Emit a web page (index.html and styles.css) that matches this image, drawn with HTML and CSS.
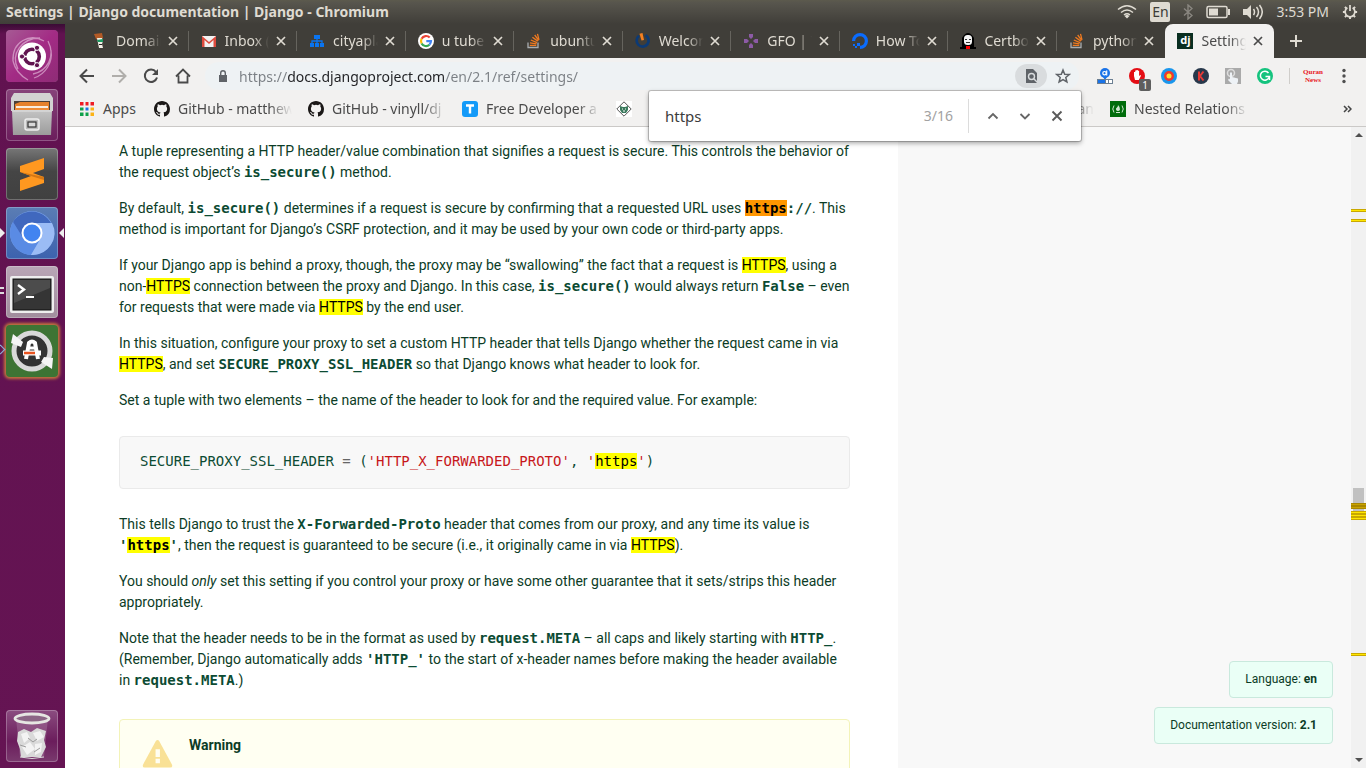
FILE: index.html
```html
<!DOCTYPE html>
<html lang="en">
<head>
<meta charset="utf-8">
<title>Settings | Django documentation | Django</title>
<link rel="stylesheet" href="styles.css">
</head>
<body>
<svg class="defs" aria-hidden="true">
  <defs>
    <linearGradient id="steel" x1="0" y1="0" x2="0" y2="1"><stop offset="0" stop-color="#c4c4c4"/><stop offset="1" stop-color="#9c9c9c"/></linearGradient>
    <linearGradient id="dash" x1="0" y1="0" x2="1" y2="1"><stop offset="0" stop-color="#a65a94"/><stop offset=".5" stop-color="#a32b85"/><stop offset="1" stop-color="#8e2c76"/></linearGradient>
    <symbol id="x" viewBox="0 0 10 10"><path d="M1 1l8 8M9 1L1 9" stroke="currentColor" stroke-width="1.7" fill="none"/></symbol>
    <symbol id="so" viewBox="0 0 16 16"><path d="M2 9.500v5h10v-5" fill="none" stroke="#a9adb0" stroke-width="1.300"/><path d="M3.800 12.300h6.500M4 9.800l6.500 1.100M4.800 7l6.200 2.600M6.400 4.200l5.400 3.900M8.700 2l4 5.300M11.500.8l1.500 6" stroke="#ef7a20" stroke-width="1.300" fill="none"/></symbol>
    <symbol id="gh" viewBox="0 0 16 16"><path fill="#1b1817" d="M8 0C3.580 0 0 3.580 0 8c0 3.540 2.290 6.530 5.470 7.590.4.070.55-.17.55-.38 0-.19-.01-.82-.01-1.490-2.010.37-2.530-.49-2.690-.94-.09-.23-.48-.94-.82-1.130-.28-.15-.68-.52-.01-.53.63-.01 1.080.58 1.230.82.72 1.210 1.870.87 2.330.66.070-.52.28-.87.51-1.070-1.780-.2-3.640-.89-3.640-3.950 0-.87.31-1.590.82-2.150-.08-.2-.36-1.020.08-2.120 0 0 .67-.21 2.200.82a7.600 7.600 0 0 1 4 0c1.530-1.040 2.200-.82 2.200-.82.44 1.100.16 1.920.08 2.120.51.56.82 1.270.82 2.150 0 3.070-1.870 3.750-3.650 3.950.29.25.54.73.54 1.480 0 1.070-.01 1.930-.01 2.200 0 .21.15.46.55.38A8 8 0 0 0 16 8c0-4.420-3.580-8-8-8z"/></symbol>
  </defs>
</svg>

<header class="menubar">
  <h1 class="window-title">Settings | Django documentation | Django - Chromium</h1>
  <div class="indicators">
    <svg class="ind-wifi" viewBox="0 0 20 16"><path d="M1 5.500Q10-2 19 5.500M4 8.500q6-5 12 0M7 11q3-2.500 6 0" fill="none" stroke="#dfdbd2" stroke-width="1.500"/><path d="M7.500 12L10 10.500 12.500 12 10 14.500z" fill="#dfdbd2"/></svg>
    <span class="keyboard">En</span>
    <svg class="ind-bt" viewBox="0 0 10 16"><path d="M1 4.500l8 7-4 3.500V1l4 3.500-8 7" fill="none" stroke="#8a8780" stroke-width="1.400"/></svg>
    <svg class="ind-battery" viewBox="0 0 24 14"><rect x="1" y="1.500" width="20" height="11" rx="1.500" fill="none" stroke="#dfdbd2" stroke-width="1.500"/><path d="M3 3.500h9v7H3z" fill="#dfdbd2"/><path d="M22 4h2v6h-2z" fill="#dfdbd2"/></svg>
    <svg class="ind-sound" viewBox="0 0 20 16"><path d="M0 5h4l4-4v14l-4-4H0z" fill="#dfdbd2"/><path d="M10.500 5q2 3 0 6M13.500 3q4 5 0 10M16.500 1q5.500 7 0 14" fill="none" stroke="#dfdbd2" stroke-width="1.500"/></svg>
    <span class="clock">3:53 PM</span>
    <svg class="ind-gear" viewBox="0 0 18 18"><path d="M6 4.300a5.500 5.500 0 1 0 6 0M9 1v7" fill="none" stroke="#dfdbd2" stroke-width="2"/><path d="M1 9h3M14 9h3M9 14v3M3.300 3.300l2 2M14.700 3.300l-2 2M3.300 14.700l2-2M14.700 14.700l-2-2" stroke="#dfdbd2" stroke-width="2.200"/></svg>
  </div>
</header>

<div class="desktop">
  <nav class="launcher" aria-label="Launcher">
    <button class="app dash" aria-label="Dash">
      <svg viewBox="0 0 52 52"><rect width="52" height="52" rx="4" fill="url(#dash)"/><g fill="none" stroke="#e5bcdc" stroke-width="1.300" opacity=".65"><path d="M7 31C6 11 24 3 38 11M12 39C4 24 16 8 34 8M42 11c8 16-1 30-15 33M45 20c2 12-5 24-17 28M7 31c2 9 8 15 15 19"/></g><circle cx="26" cy="26.500" r="14" fill="#fff"/><circle cx="26" cy="26.500" r="7.300" fill="none" stroke="#611450" stroke-width="3.600"/><path d="M26 26.500H12M26 26.500l6-11M26 26.500l6 11" stroke="#fff" stroke-width="1.400"/><circle cx="26" cy="26.500" r="5" fill="#fff"/><g fill="#611450" stroke="#fff"><circle cx="16" cy="26.500" r="2.600"/><circle cx="31" cy="17.800" r="2.600"/><circle cx="31" cy="35.200" r="2.600"/></g></svg>
    </button>
    <button class="app files" aria-label="Files">
      <svg viewBox="0 0 52 52"><path d="M8 4h36l3 5v13H5V9z" fill="#d2d2d2"/><path d="M8 12h36v11H8z" fill="#4b4038"/><path d="M9 15l5-2h29v9H9z" fill="#e6812c"/><path d="M10 17h32v2H10z" fill="#f9ede0"/><path d="M9 19h34v3H9z" fill="#ee8b37"/><path d="M6 21h40l-1 25H7z" fill="url(#steel)"/><path d="M6 22h40" stroke="#e4e4e4"/><rect x="19" y="30" width="14" height="11" rx="2" fill="#bbb" stroke="#eee" stroke-width="1.500"/><rect x="22" y="33" width="8" height="5" fill="#d8d8d8" stroke="#333" stroke-width="1.200"/></svg>
    </button>
    <button class="app sublime" aria-label="Sublime Text">
      <svg viewBox="0 0 52 52"><path d="M14 18l24-8v11l-11 4 11 4v6l-24 8V32l11-4-11-4z" fill="#ff9820"/><path d="M14 24l24 5v3l-13-4z" fill="#d67713"/></svg>
    </button>
    <button class="app chromium" aria-label="Chromium">
      <svg viewBox="0 0 52 52"><circle cx="26" cy="26" r="22" fill="#7ba5ee"/><path d="M7 15a22 22 0 0 0 18 33l10-17-18 0z" fill="#5a8be4"/><path d="M7 15a22 22 0 0 1 38 1H26l-9 15z" fill="#4068be"/><path d="M26 16h20a22 22 0 0 1-21 32l10-17z" fill="#9bbcf5"/><circle cx="26" cy="26" r="10.500" fill="#fff"/><circle cx="26" cy="26" r="8.500" fill="#4284f0"/></svg>
      <i class="mark-left"></i><i class="mark-right"></i>
    </button>
    <button class="app terminal" aria-label="Terminal">
      <svg viewBox="0 0 52 52"><rect x="4" y="10" width="44" height="37" rx="2" fill="#eee"/><rect x="7" y="13" width="38" height="31" fill="#353535" stroke="#111"/><path d="M8 14h36v8L8 37z" fill="#5b5b5b" opacity=".6"/><path d="M12 19l6 4.500-6 4.500" fill="none" stroke="#fff" stroke-width="2.400"/><path d="M20 31h8" stroke="#fff" stroke-width="2"/></svg>
      <i class="mark-double"></i>
    </button>
    <button class="app updater" aria-label="Software Updater">
      <svg viewBox="0 0 52 52"><circle cx="26" cy="26" r="18" fill="#333" stroke="#d9d9d9" stroke-width="5"/><path d="M5 18L7 9l10 8-2 5z" fill="#f5f5f5"/><path d="M47 33l-1 11-11-7 3-5z" fill="#f5f5f5"/><path d="M20 34l3-16q3-3 6 0l3 16" fill="none" stroke="#fff" stroke-width="4"/><path d="M22 23h8" stroke="#fff" stroke-width="3"/><path d="M17 28h18" stroke="#fff" stroke-width="5"/><path d="M18 28h11" stroke="#e95420" stroke-width="2.500"/></svg>
      <i class="mark-open"></i>
    </button>
    <button class="app trash" aria-label="Trash">
      <svg viewBox="0 0 52 52"><path d="M10 8h32l-4 39H14z" fill="#a87aa0" opacity=".45"/><path d="M12 22l6-3 7 3 6-4 9 3-2 9 2 7-5 10H15l-1-8-3-8z" fill="#d9d9d9"/><path d="M15 24l6-2 3 6-6 5zM27 23l7-2 4 6-7 4zM16 37l8-5 5 7-8 6zM29 34l7-1-1 9-6 3z" fill="#f3f3f3"/><path d="M22 28l5 4 4-3M14 35l6 2M28 42l6-4" stroke="#9c9c9c" fill="none"/><ellipse cx="26" cy="8.500" rx="17" ry="4.500" fill="#8c6685" stroke="#e6e6e2" stroke-width="2.800"/><path d="M14 47q12 3 24 0" stroke="#ddd" fill="none"/></svg>
    </button>
  </nav>

  <div class="browser">
    <div class="tabstrip" role="tablist">
      <div class="tab"><svg viewBox="0 0 16 16"><path d="M2 1l8-1 1 5-4 2-3-1z" fill="#b25a26"/><path d="M5 5h5l1 3-1 3 1 4H7L6 10z" fill="#f3f0e8"/><path d="M5 7l6-1v3H6z" fill="#1c9a62"/><path d="M7 11.500h3" stroke="#222"/></svg><button class="tab-title" role="tab">Domain</button><button class="tab-close" aria-label="Close tab"><svg><use href="#x"/></svg></button></div>
      <div class="tab"><svg viewBox="0 0 16 16"><path d="M1 3h14v11H1z" fill="#f2f2f2"/><path d="M1 14V3l7 6 7-6v11h-2.500V7L8 11 3.500 7v7z" fill="#dd4b3e"/></svg><button class="tab-title" role="tab">Inbox (1)</button><button class="tab-close" aria-label="Close tab"><svg><use href="#x"/></svg></button></div>
      <div class="tab"><svg viewBox="0 0 16 16"><path d="M5 2h6v4H5zM1 10h4v4H1zM6 10h4v4H6zM11 10h4v4h-4z" fill="#0a74f0"/><path d="M8 5v6M3 11V8h10v3" fill="none" stroke="#0a74f0" stroke-width="1.300"/></svg><button class="tab-title" role="tab">cityaplan</button><button class="tab-close" aria-label="Close tab"><svg><use href="#x"/></svg></button></div>
      <div class="tab"><svg viewBox="0 0 16 16"><circle cx="8" cy="8" r="8" fill="#fff"/><g fill="none" stroke-width="2.200"><path d="M11.700 4.600A5 5 0 0 0 3.600 5.700" stroke="#ea4335"/><path d="M3.600 5.700a5 5 0 0 0 0 4.700" stroke="#fbbc05"/><path d="M3.600 10.400a5 5 0 0 0 7.800 1.300" stroke="#34a853"/><path d="M11.400 11.700A5 5 0 0 0 13 8.100H8.300" stroke="#4285f4"/></g></svg><button class="tab-title" role="tab">u tube -</button><button class="tab-close" aria-label="Close tab"><svg><use href="#x"/></svg></button></div>
      <div class="tab"><svg><use href="#so"/></svg><button class="tab-title" role="tab">ubuntu</button><button class="tab-close" aria-label="Close tab"><svg><use href="#x"/></svg></button></div>
      <div class="tab"><svg viewBox="0 0 16 16"><path d="M10.500 2.300a6 6 0 1 1-6.500.5" fill="none" stroke="#0c3a75" stroke-width="2.700"/><path d="M4.500.8l3-.8L9 7 6.500 7.500z" fill="#f58020"/></svg><button class="tab-title" role="tab">Welcome</button><button class="tab-close" aria-label="Close tab"><svg><use href="#x"/></svg></button></div>
      <div class="tab"><svg viewBox="0 0 16 16"><path d="M6 1h4v3L8 6 6 4zM6 15h4v-3l-2-2-2 2zM1 6v4h3l2-2-2-2zM15 6v4h-3l-2-2 2-2z" fill="#8c5aa5"/></svg><button class="tab-title" role="tab">GFO | The</button><button class="tab-close" aria-label="Close tab"><svg><use href="#x"/></svg></button></div>
      <div class="tab"><svg viewBox="0 0 16 16"><path d="M1.600 8A6.400 6.400 0 1 1 8 14.400" fill="none" stroke="#0a6cff" stroke-width="3.200"/><path d="M5 10h3v3H5zM3 13h2v2H3zM1 11h2v2H1z" fill="#0a6cff"/></svg><button class="tab-title" role="tab">How To</button><button class="tab-close" aria-label="Close tab"><svg><use href="#x"/></svg></button></div>
      <div class="tab"><svg viewBox="0 0 16 16"><path d="M2 14V5q6-10 12 0v9h2v2H0v-2z" fill="#000"/><rect x="4" y="2" width="8" height="10" rx="3.500" fill="#f5f5f5"/><path d="M5 6.500h2M9 6.500h2M6 9.500h4" stroke="#333"/><path d="M6 13h4v3H6z" fill="#f00"/></svg><button class="tab-title" role="tab">Certbot</button><button class="tab-close" aria-label="Close tab"><svg><use href="#x"/></svg></button></div>
      <div class="tab"><svg><use href="#so"/></svg><button class="tab-title" role="tab">python -</button><button class="tab-close" aria-label="Close tab"><svg><use href="#x"/></svg></button></div>
      <div class="tab active"><span class="dj">dj</span><button class="tab-title" role="tab" aria-selected="true">Settings</button><button class="tab-close" aria-label="Close tab"><svg><use href="#x"/></svg></button></div>
      <button class="new-tab" aria-label="New tab"><svg viewBox="0 0 12 12"><path d="M6 0v12M0 6h12" stroke="#dfdbd2" stroke-width="2"/></svg></button>
    </div>

    <div class="toolbar">
      <button class="tool" aria-label="Back"><svg viewBox="0 0 16 16"><path d="M15 8H2M8 1.500L1.500 8 8 14.500" fill="none" stroke="#4a4a4a" stroke-width="2"/></svg></button>
      <button class="tool" aria-label="Forward"><svg viewBox="0 0 16 16"><path d="M1 8h13M8 1.500L14.500 8 8 14.500" fill="none" stroke="#b0aeab" stroke-width="2"/></svg></button>
      <button class="tool" aria-label="Reload"><svg viewBox="0 0 16 16"><path d="M13 4A6.200 6.200 0 1 0 14 9.500" fill="none" stroke="#4a4a4a" stroke-width="2"/><path d="M15 1v6H9z" fill="#4a4a4a"/></svg></button>
      <button class="tool" aria-label="Home"><svg viewBox="0 0 16 16"><path d="M1 8.500L8 1.500l7 7M3.500 7.500v7h9v-7" fill="none" stroke="#4a4a4a" stroke-width="1.800"/></svg></button>
      <div class="omnibox">
        <svg class="lock" viewBox="0 0 10 12"><path d="M1 5h8v7H1z" fill="#5f6368"/><path d="M2.700 5V3q0-2.200 2.300-2.200T7.300 3v2" fill="none" stroke="#5f6368" stroke-width="1.400"/></svg>
        <input class="url" type="text" aria-label="Address" value="https://docs.djangoproject.com/en/2.1/ref/settings/">
        <button class="find-chip" aria-label="Find in page"><svg viewBox="0 0 14 16"><path d="M2 1h7l4 4v10H2z" fill="#5f6368"/><circle cx="7.500" cy="8.500" r="3" fill="none" stroke="#d9dcde" stroke-width="1.400"/><path d="M9.500 10.500l4 4" stroke="#d9dcde" stroke-width="1.400"/></svg></button>
        <button class="tool" aria-label="Bookmark"><svg viewBox="0 0 16 16"><path d="M8 2l1.700 4.200 4.600.3-3.500 3 1.100 4.500L8 11.600 4.100 14l1.100-4.500-3.500-3 4.600-.3z" fill="none" stroke="#5f6368" stroke-width="1.500"/></svg></button>
      </div>
      <button class="tool" aria-label="Alexa"><svg viewBox="0 0 16 16"><path d="M8 12L6 9h4z" fill="#1a73e8"/><circle cx="8" cy="5" r="5" fill="#1a73e8"/><circle cx="7.500" cy="5.200" r="1.700" fill="none" stroke="#fff" stroke-width="1.200"/><path d="M9.700 2.500V7.500" stroke="#fff" stroke-width="1.200"/><path d="M0 11h16v5H0z" fill="#6c7f92"/><path d="M1 12h7v3H1z" fill="#1a73e8"/><path d="M9 12h2v3H9zM12 12h3v3h-3z" fill="#fff"/></svg></button>
      <button class="tool" aria-label="Ad blocker"><svg viewBox="0 0 16 16"><circle cx="8" cy="8" r="8" fill="#e40d14"/><path d="M5 8V4h1.200v3-4.500h1.300V7 2h1.300v5-4.200h1.300V8l1.300-1 .6.700L9.800 12H6z" fill="#fff"/></svg><span class="count">1</span></button>
      <button class="tool" aria-label="Target"><svg viewBox="0 0 16 16"><circle cx="8" cy="8" r="8" fill="#1a96ec"/><circle cx="8" cy="8" r="5" fill="#f0392c"/><circle cx="8" cy="8" r="2.500" fill="#ffe02e"/></svg></button>
      <button class="tool" aria-label="K"><svg viewBox="0 0 16 16"><circle cx="8" cy="8" r="8" fill="#28384b"/><path d="M6 3.500v9M10.500 3.500L7 8l3.500 4.500" fill="none" stroke="#e53a36" stroke-width="2"/></svg></button>
      <button class="tool" aria-label="Click"><svg viewBox="0 0 16 16"><path d="M0 0h16v16H0z" fill="#aaa"/><circle cx="6" cy="5" r="3.500" fill="none" stroke="#ddd" stroke-width="1.500"/><path d="M5 4.500h2V9l6 1.500v3L12 16H7l-4-4 1-1.500 1 1z" fill="#eef2f6"/></svg></button>
      <button class="tool" aria-label="Grammar"><svg viewBox="0 0 16 16"><circle cx="8" cy="8" r="8" fill="#15c37e"/><path d="M11.500 5A4.500 4.500 0 1 0 12 9.500M8.500 8.500h4v3.500" fill="none" stroke="#fff" stroke-width="1.500"/></svg></button>
      <span class="rule"></span>
      <span class="profile"><b>Quran</b><b>News</b></span>
      <button class="tool menu" aria-label="Menu"><svg viewBox="0 0 16 16"><g fill="#4f4f4f"><circle cx="8" cy="2.500" r="1.700"/><circle cx="8" cy="8" r="1.700"/><circle cx="8" cy="13.500" r="1.700"/></g></svg></button>
    </div>

    <nav class="bookmarks" aria-label="Bookmarks">
      <a href="#"><svg viewBox="0 0 16 16"><path d="M1 1h4v4H1zM6 1h4v4H6zM11 1h4v4h-4z" fill="#ee1c25"/><path d="M1 6h4v4H1zM1 11h4v4H1zM6 11h4v4H6z" fill="#0fa14a"/><path d="M6 6h4v4H6z" fill="#1a73e8"/><path d="M11 6h4v4h-4zM11 11h4v4h-4z" fill="#fcb316"/><path d="M5.500 0v16M10.500 0v16M0 5.500h16M0 10.500h16" stroke="#f2f1f0" stroke-width="2"/></svg><span class="apps">Apps</span></a>
      <a href="#"><svg><use href="#gh"/></svg><span class="label">GitHub - matthew</span></a>
      <a href="#"><svg><use href="#gh"/></svg><span class="label">GitHub - vinyll/dj</span></a>
      <a href="#"><svg viewBox="0 0 16 16"><rect width="16" height="16" rx="3" fill="#149af8"/><path d="M4 4.500h8M8 4v8.500" stroke="#fff" stroke-width="2.400"/></svg><span class="label">Free Developer a</span></a>
      <a href="#" aria-label="Bookmark"><svg viewBox="0 0 16 16"><path d="M0 0h16v16H0z" fill="#fff"/><path d="M8 .8L15.200 8 8 15.200.8 8z" fill="none" stroke="#555"/><path d="M4 5l3 1h2l3-1v4l-2 3H6L4 9z" fill="#3b7a5d"/><path d="M6 8h1M9 8h1M7 10h2" stroke="#fff"/></svg></a>
      <a href="#" class="covered"><span class="label">an</span></a>
      <a href="#"><svg viewBox="0 0 16 16"><path d="M0 0h16v16H0z" fill="#006c0b"/><path d="M4 4.500q-2.500 3.500 0 7M12 4.500q2.500 3.500 0 7" fill="none" stroke="#cfe6d0"/><path d="M8 4q2.500 2.500 2 4.500-.5 1.500-2 1.500t-2-1.500Q5.500 7.500 7 6.500 8 5.500 8 4z" fill="#cfe6d0"/><path d="M6 11.500h4" stroke="#cfe6d0"/></svg><span class="label">Nested Relations</span></a>
      <button class="more" aria-label="More bookmarks"><svg viewBox="0 0 9 8"><path d="M1 1l3 3-3 3M5 1l3 3-3 3" fill="none" stroke="#444" stroke-width="1.500"/></svg></button>
    </nav>

    <div class="findbar" role="search">
      <input type="text" aria-label="Find in page" value="https">
      <span class="matches">3/16</span>
      <button aria-label="Previous"><svg viewBox="0 0 12 12"><path d="M1.500 8.500L6 4l4.500 4.500" fill="none" stroke="#666" stroke-width="1.800"/></svg></button>
      <button aria-label="Next"><svg viewBox="0 0 12 12"><path d="M1.500 4L6 8.500 10.500 4" fill="none" stroke="#666" stroke-width="1.800"/></svg></button>
      <button aria-label="Close"><svg viewBox="0 0 12 12"><path d="M1.500 1.500l9 9M10.500 1.500l-9 9" stroke="#5a5a5a" stroke-width="1.900"/></svg></button>
    </div>

    <div class="viewport">
      <main class="doc">
        <p>A tuple representing a HTTP header/value combination that signifies a request is secure. This controls the behavior of the request object’s <code>is_secure()</code> method.</p>
        <p>By default, <code>is_secure()</code> determines if a request is secure by confirming that a requested URL uses <code><mark class="current">https</mark>://</code>. This method is important for Django’s CSRF protection, and it may be used by your own code or third-party apps.</p>
        <p>If your Django app is behind a proxy, though, the proxy may be “swallowing” the fact that a request is <mark>HTTPS</mark>, using a non-<mark>HTTPS</mark> connection between the proxy and Django. In this case, <code>is_secure()</code> would always return <code>False</code> – even for requests that were made via <mark>HTTPS</mark> by the end user.</p>
        <p>In this situation, configure your proxy to set a custom HTTP header that tells Django whether the request came in via <mark>HTTPS</mark>, and set <code>SECURE_PROXY_SSL_HEADER</code> so that Django knows what header to look for.</p>
        <p>Set a tuple with two elements – the name of the header to look for and the required value. For example:</p>
        <pre class="snippet">SECURE_PROXY_SSL_HEADER <span class="op">=</span> (<span class="str">'HTTP_X_FORWARDED_PROTO'</span>, <span class="str">'<mark>https</mark>'</span>)</pre>
        <p>This tells Django to trust the <code>X-Forwarded-Proto</code> header that comes from our proxy, and any time its value is <code>'<mark>https</mark>'</code>, then the request is guaranteed to be secure (i.e., it originally came in via <mark>HTTPS</mark>).</p>
        <p>You should <em>only</em> set this setting if you control your proxy or have some other guarantee that it sets/strips this header appropriately.</p>
        <p>Note that the header needs to be in the format as used by <code>request.META</code> – all caps and likely starting with <code>HTTP_</code>. (Remember, Django automatically adds <code>'HTTP_'</code> to the start of x-header names before making the header available in <code>request.META</code>.)</p>
        <section class="warning">
          <svg viewBox="0 0 32 30"><path d="M14 2q2-3 4 0l13 24q1 3-2 3H3q-3 0-2-3z" fill="#f9e196"/><path d="M14 10h4.500v8H14zM14 20h4.500v4.500H14z" fill="#fffef2"/></svg>
          <h2>Warning</h2>
        </section>
      </main>
      <aside class="side">
        <a href="#" class="chip">Language: <b>en</b></a>
        <a href="#" class="chip">Documentation version: <b>2.1</b></a>
      </aside>
      <div class="scrollbar">
        <i class="arrow up"></i>
        <i class="thumb"></i>
        <i class="tick" style="top:12.8%"></i>
        <i class="tick" style="top:14.4%"></i>
        <i class="tick dark" style="top:58.7%"></i>
        <i class="tick dark" style="top:59.1%"></i>
        <i class="tick" style="top:59.9%"></i>
        <i class="tick" style="top:60.3%"></i>
        <i class="tick" style="top:60.8%"></i>
        <i class="tick" style="top:82.1%"></i>
        <i class="arrow down"></i>
      </div>
    </div>
  </div>
</div>
</body>
</html>
```
FILE: styles.css
```css
* { box-sizing: border-box; }
html, body { height: 100%; }
body {
  margin: 0;
  display: flex;
  flex-direction: column;
  overflow: hidden;
  background: #fff;
  font-family: "Noto Sans", "Open Sans", sans-serif;
  font-size: 14px;
  color: #4a4a4a;
}
button { border: 0; padding: 0; margin: 0; background: none; font: inherit; color: inherit; }
a { color: inherit; text-decoration: none; }
svg { display: block; flex: none; }
.defs { position: absolute; width: 0; height: 0; }

/* desktop panel */
.menubar {
  flex: none;
  height: 24px;
  padding: 0 8px 0 6px;
  display: flex;
  align-items: center;
  justify-content: space-between;
  background: linear-gradient(#5c5a4d, #57554d 3px, #403e39);
  color: #dfdbd2;
}
.window-title { margin: 0; font-size: 14px; line-height: 24px; font-weight: 700; white-space: nowrap; }
.indicators { display: flex; align-items: center; gap: 13px; }
.ind-wifi { width: 20px; height: 16px; }
.ind-bt { width: 10px; height: 16px; }
.ind-battery { width: 24px; height: 14px; }
.ind-sound { width: 20px; height: 16px; }
.ind-gear { width: 16px; height: 16px; }
.keyboard { width: 20px; height: 20px; border-radius: 2px; background: #dfdbd2; color: #3c3b37; text-align: center; line-height: 20px; }
.clock { font-size: 14px; line-height: 24px; }

.desktop { flex: 1; min-height: 0; display: flex; }

/* launcher */
.launcher {
  flex: none;
  width: 65px;
  padding: 6px 7px 6px 6px;
  display: flex;
  flex-direction: column;
  gap: 7px;
  background: linear-gradient(#3a0b35, #611250 10px, #651453);
}
.app { position: relative; flex: none; height: 52px; border-radius: 4px; box-shadow: inset 0 0 0 1px #ffffff40; }
.app svg { width: 100%; height: 100%; border-radius: 4px; }
.files { background: linear-gradient(#86437a, #6b1d5c); }
.sublime { background: linear-gradient(#777, #454545 45%, #404040); }
.chromium { background: linear-gradient(#5b7db4, #3c62ae); }
.terminal { background: linear-gradient(#b9a6b6, #a18d9d); }
.updater { background: #3d7434; box-shadow: 0 0 3px 2px #c4753f; }
.trash { margin-top: auto; background: linear-gradient(#8b4c80, #6b1d5c 60%, #7a3a6e); }
.mark-left, .mark-right, .mark-double, .mark-open { position: absolute; top: 21px; }
.mark-left { left: -6px; border: 5px solid transparent; border-left-color: #eee; border-right: 0; }
.mark-right { right: -6px; border: 5px solid transparent; border-right-color: #eee; border-left: 0; }
.mark-double { left: -6px; width: 4px; height: 7px; border: solid #ddd; border-width: 2px 0; }
.mark-open { left: -9px; width: 7px; height: 7px; border: solid #8db4dc; border-width: 1px 1px 0 0; transform: rotate(45deg); }

/* browser chrome */
.browser { position: relative; flex: 1; min-width: 0; display: flex; flex-direction: column; background: #f2f1f0; }
.tabstrip { flex: none; height: 34px; padding-left: 15px; display: flex; background: #403e39; color: #dfdbd2; }
.tab {
  position: relative;
  flex: 1;
  min-width: 0;
  padding: 0 11px 0 12px;
  display: flex;
  align-items: center;
}
.tab::after { content: ""; position: absolute; right: 0; top: 7px; width: 1px; height: 20px; background: #66645e; }
.tab:nth-child(10)::after, .tab.active::after { display: none; }
.tab > svg, .dj { width: 16px; height: 16px; }
.tab-title {
  flex: 1;
  min-width: 0;
  margin-left: 8px;
  font-size: 14px;
  line-height: 32px;
  text-align: left;
  overflow: hidden;
  white-space: nowrap;
  mask-image: linear-gradient(90deg, #000 65%, transparent);
}
.tab-close { margin-left: 7px; }
.tab-close svg { width: 10px; height: 10px; }
.tab.active { background: #f2f1f0; color: #4a4a4a; border-radius: 8px 8px 0 0; }
.dj { flex: none; background: #092e20; color: #fff; font-size: 11px; font-weight: 700; line-height: 14px; text-align: center; }
.new-tab { flex: none; width: 92px; padding-left: 16px; }
.new-tab svg { width: 12px; height: 12px; }

.toolbar { flex: none; height: 36px; padding: 0 6px; display: flex; align-items: center; }
.tool { position: relative; flex: none; width: 32px; height: 28px; display: flex; align-items: center; justify-content: center; }
.tool svg { width: 16px; height: 16px; }
.omnibox {
  flex: 1;
  min-width: 0;
  height: 28px;
  margin: 0 10px 0 6px;
  padding-left: 13px;
  display: flex;
  align-items: center;
  border-radius: 14px;
  background: #eef2f4;
}
.lock { width: 10px; height: 12px; }
.url {
  flex: 1;
  min-width: 0;
  margin-left: 11px;
  padding: 0;
  border: 0;
  height: 28px;
  font: 14px "Noto Sans", "Open Sans", sans-serif;
  color: #202124;
  -webkit-text-fill-color: transparent;
  background: linear-gradient(90deg, #7a7f84 49px, #202124 49px 205px, #7a7f84 205px);
  background-clip: text;
}
.find-chip { flex: none; width: 32px; height: 24px; border-radius: 12px; background: #d9dcde; display: flex; align-items: center; justify-content: center; }
.find-chip svg { width: 14px; height: 16px; }
.count { position: absolute; right: 2px; bottom: -1px; width: 12px; height: 12px; border-radius: 2px; background: #5e5e5e; color: #fff; font-size: 10px; line-height: 12px; text-align: center; }
.rule { flex: none; width: 1px; height: 16px; margin: 0 8px; background: #cfcdca; }
.profile { flex: none; width: 30px; display: flex; flex-direction: column; gap: 2px; text-align: center; color: #e8151b; font-family: "Liberation Serif", serif; font-size: 7px; line-height: 6px; }

.bookmarks { flex: none; height: 33px; padding: 0 14px 2px; display: flex; align-items: center; gap: 16px; border-bottom: 1px solid #cbc9c7; font-size: 14px; }
.bookmarks a { flex: none; display: flex; align-items: center; gap: 8px; white-space: nowrap; line-height: 20px; }
.bookmarks svg { width: 16px; height: 16px; }
.apps { min-width: 35px; }
.label { width: 114px; overflow: hidden; mask-image: linear-gradient(90deg, #000 80%, transparent); }
.bookmarks .covered { width: 446px; justify-content: flex-end; }
.covered .label { text-align: right; }
.bookmarks .more { margin-left: auto; }
.bookmarks .more svg { width: 9px; height: 8px; }

.findbar {
  position: absolute;
  z-index: 2;
  top: 67px;
  right: 285px;
  width: 432px;
  height: 50px;
  padding: 0 8px 0 16px;
  display: flex;
  align-items: center;
  border-radius: 2px;
  background: #fff;
  box-shadow: 0 0 0 1px #00000030, 0 2px 5px #00000060;
}
.findbar input { flex: 1; min-width: 0; padding: 0; border: 0; background: none; color: #3c3c3c; font: 15px "Noto Sans", "Open Sans", sans-serif; outline: 0; }
.matches { padding-right: 15px; margin-right: 8px; border-right: 1px solid #dcdcdc; line-height: 34px; font-size: 14px; color: #a2a2a2; }
.findbar button { width: 32px; height: 32px; display: flex; align-items: center; justify-content: center; }
.findbar svg { width: 12px; height: 12px; }

/* page */
.viewport { flex: 1; min-height: 0; display: flex; overflow: hidden; background: #f8f8f8; color: #0c3c26; font-family: Roboto, sans-serif; }
.doc { flex: 0 0 64%; min-width: 0; padding: 14px 48px 0 54px; background: #fff; font-size: 14px; line-height: 21px; }
.doc p { margin: 0 0 15px; }
.doc code, .snippet { font-family: "DejaVu Sans Mono", monospace; font-size: 14px; line-height: 16px; }
.doc code { font-weight: 700; color: #0c4b33; }
mark { background: #ff0; color: #000; }
mark.current { background: #ff9600; }
.snippet { margin: 25px 0; padding: 16px 20px 19px; border: 1px solid #eaeaea; border-radius: 4px; background: #f8f8f8; color: #0c4b33; }
.op { color: #666; }
.str { color: #c7171b; }
.warning { display: flex; gap: 16px; margin-top: 28px; padding: 15px 22px 80px; border: 1px solid #f3f3b8; border-radius: 4px; background: #fffff2; }
.warning svg { width: 31px; height: 30px; margin-top: 4px; }
.warning h2 { margin: 0; font-size: 14px; line-height: 21px; font-weight: 700; }

.side { flex: 1; min-width: 0; padding: 0 18px 24px; display: flex; flex-direction: column; align-items: flex-end; justify-content: flex-end; gap: 9px; }
.chip { padding: 0 15px; border: 1px solid #c9e9dd; border-radius: 4px; background: #eafff6; font-size: 12px; line-height: 35px; }

.scrollbar { position: relative; flex: none; width: 15px; background: #f1f1f1; }
.scrollbar i { position: absolute; }
.thumb { left: 2px; top: 56.3%; width: 11px; height: 30px; background: #c1c1c1; }
.tick { left: 0; width: 15px; height: 3px; background: #ffe600; border: solid #c9a800; border-width: 1px 0; }
.tick.dark { background: #c9a300; border-color: #a88600; }
.arrow { left: 4px; border: solid transparent; border-width: 0 4px; }
.arrow.up { top: 6px; border-bottom: 4px solid #505050; }
.arrow.down { bottom: 6px; border-top: 4px solid #505050; }
```
